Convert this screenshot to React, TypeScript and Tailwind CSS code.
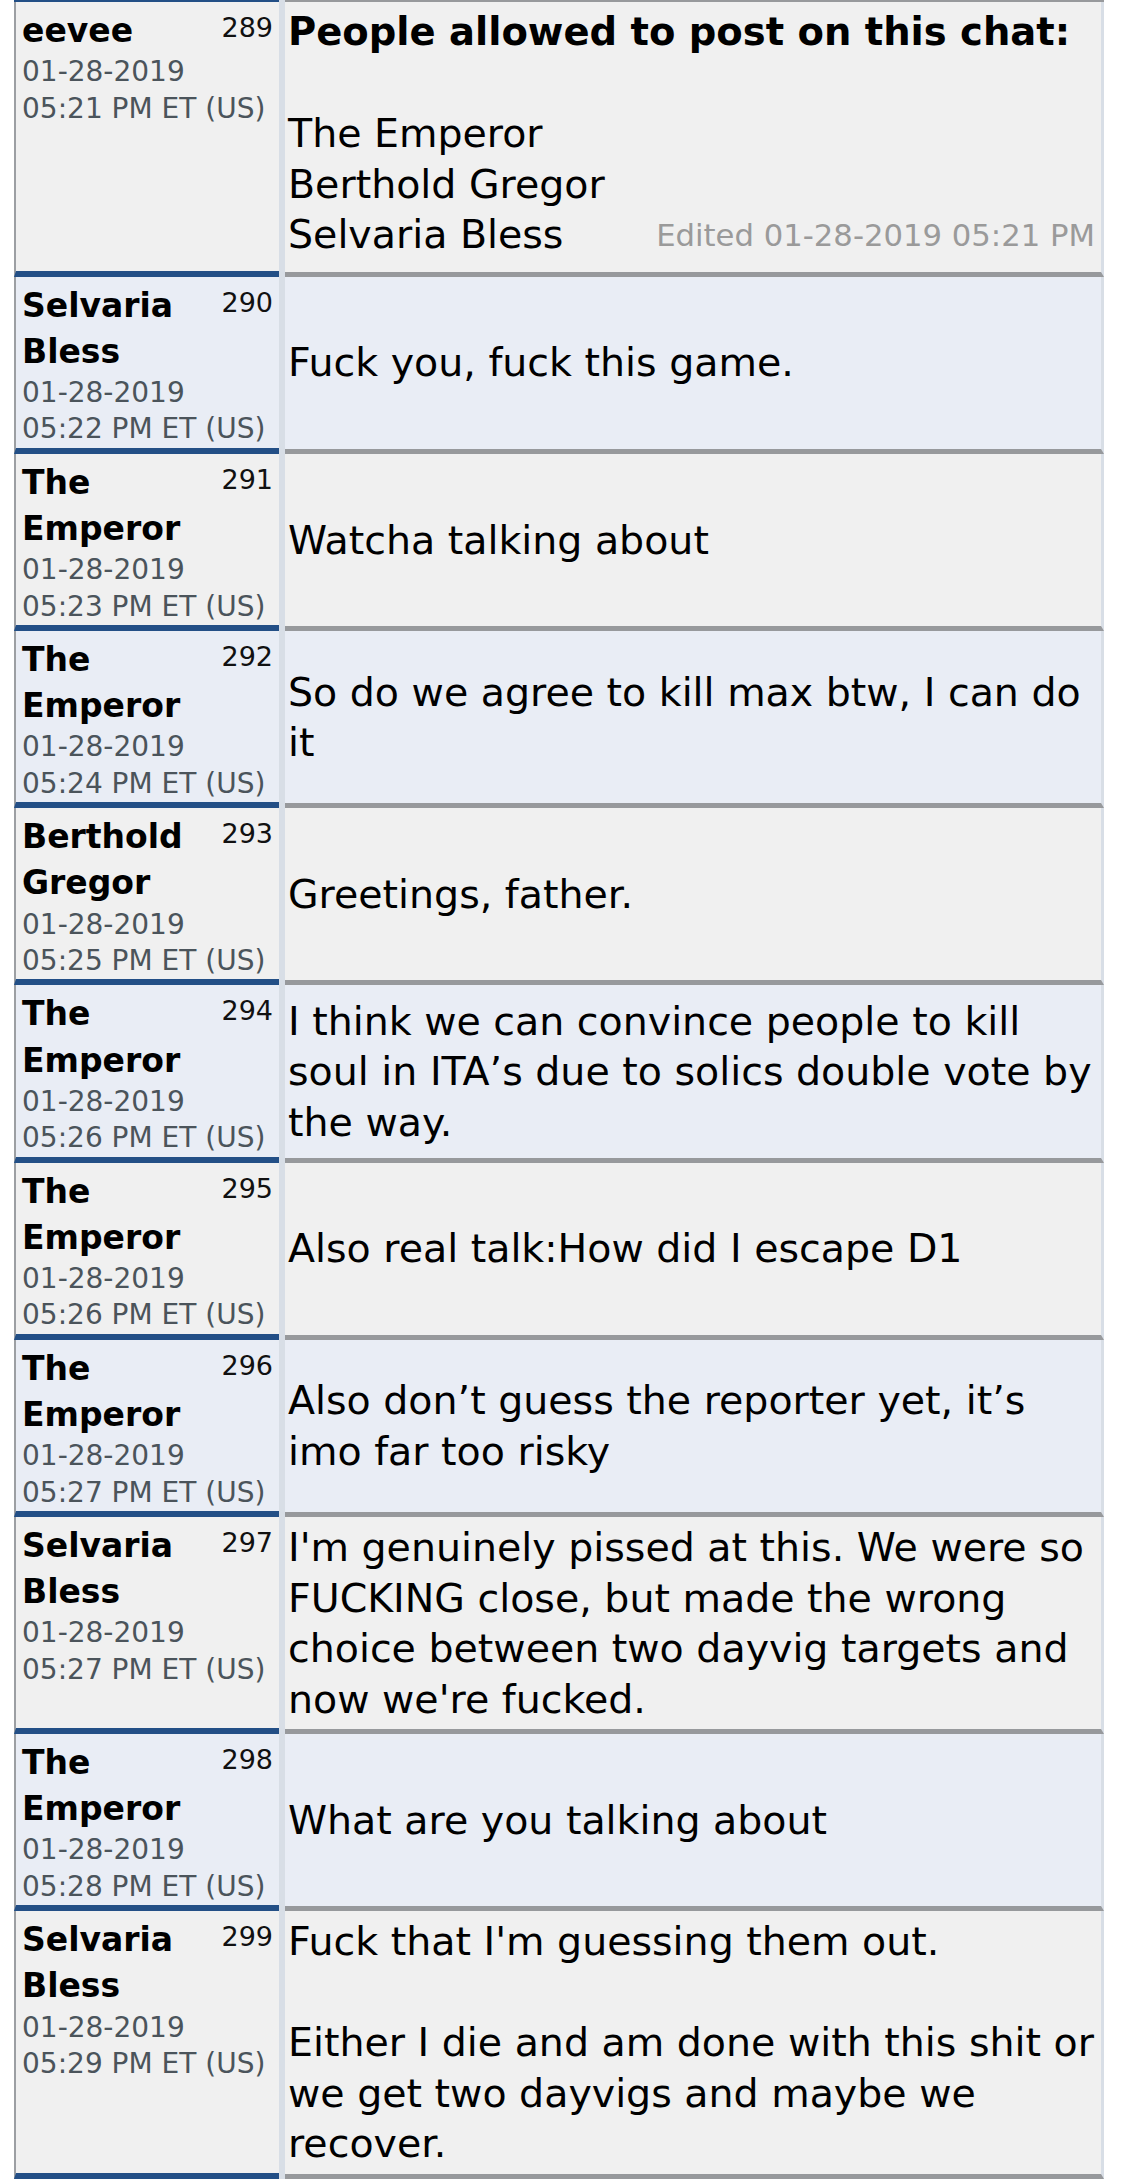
import React from 'react';

type Post = {
  num: number;
  name: string;
  time: string;
  lines: string[];
};

const posts: Post[] = [
  { num: 290, name: 'Selvaria Bless', time: '05:22', lines: ['Fuck you, fuck this game.'] },
  { num: 291, name: 'The Emperor', time: '05:23', lines: ['Watcha talking about'] },
  { num: 292, name: 'The Emperor', time: '05:24', lines: ['So do we agree to kill max btw, I can do', 'it'] },
  { num: 293, name: 'Berthold Gregor', time: '05:25', lines: ['Greetings, father.'] },
  {
    num: 294,
    name: 'The Emperor',
    time: '05:26',
    lines: ['I think we can convince people to kill', 'soul in ITA’s due to solics double vote by', 'the way.'],
  },
  { num: 295, name: 'The Emperor', time: '05:26', lines: ['Also real talk:How did I escape D1'] },
  { num: 296, name: 'The Emperor', time: '05:27', lines: ['Also don’t guess the reporter yet, it’s', 'imo far too risky'] },
  {
    num: 297,
    name: 'Selvaria Bless',
    time: '05:27',
    lines: [
      "I'm genuinely pissed at this. We were so",
      'FUCKING close, but made the wrong',
      'choice between two dayvig targets and',
      "now we're fucked.",
    ],
  },
  { num: 298, name: 'The Emperor', time: '05:28', lines: ['What are you talking about'] },
  {
    num: 299,
    name: 'Selvaria Bless',
    time: '05:29',
    lines: [
      "Fuck that I'm guessing them out.",
      '',
      'Either I die and am done with this shit or',
      'we get two dayvigs and maybe we',
      'recover.',
    ],
  },
];

function Author({ num, name, time, even }: { num: number; name: string; time: string; even: boolean }) {
  return (
    <div
      className={`w-[265px] shrink-0 border-l-2 border-b-[6px] border-l-[#9c9fa3] border-b-[#234f86] px-[6px] pt-[6px] ${
        even ? 'bg-[#e9edf5]' : 'bg-[#f0f0f0]'
      }`}
    >
      <div className="flex items-start justify-between gap-2">
        <div className="text-[33px] font-bold leading-[46.2px] text-black">{name}</div>
        <div className="mt-[2px] shrink-0 text-[27px] leading-[35px] text-[#111]">{num}</div>
      </div>
      <div className="text-[28px] leading-[36.4px] text-[#4b545b]">01-28-2019</div>
      <div className="text-[28px] leading-[36.4px] text-[#4b545b]">{time} PM ET (US)</div>
    </div>
  );
}

function PostRow({ post, even }: { post: Post; even: boolean }) {
  return (
    <div className="flex gap-[6px]">
      <Author num={post.num} name={post.name} time={post.time} even={even} />
      <div
        className={`flex flex-1 flex-col justify-center border-r-[3px] border-b-[5px] border-r-[#d8dee6] border-b-[#97999c] pl-[3px] pr-[6px] py-[5px] text-[39.5px] leading-[50.5px] text-black ${
          even ? 'bg-[#e9edf5]' : 'bg-[#f0f0f0]'
        }`}
      >
        {post.lines.map((line, i) => (
          <div key={i} className="whitespace-nowrap">
            {line === '' ? '\u00a0' : line}
          </div>
        ))}
      </div>
    </div>
  );
}

export default function App() {
  return (
    <div className="min-h-screen bg-white font-['DejaVu_Sans','Verdana',sans-serif]">
      <div className="ml-[14px] w-[1090px] bg-[#d8dee6]">
        {/* tail of the previous post */}
        <div className="flex h-[2px] gap-[6px]">
          <div className="w-[265px] bg-[#234f86]" />
          <div className="flex-1 bg-[#97999c]" />
        </div>

        {/* first post with the edit note */}
        <div className="flex gap-[6px]">
          <Author num={289} name="eevee" time="05:21" even={false} />
          <div className="flex flex-1 flex-col border-r-[3px] border-b-[5px] border-r-[#d8dee6] border-b-[#97999c] bg-[#f0f0f0] pl-[3px] pr-[6px] pt-[5px] pb-[8px] text-[39.5px] leading-[50.5px] text-black">
            <div className="text-[38.5px] font-bold">People allowed to post on this chat:</div>
            <div>{'\u00a0'}</div>
            <div>The Emperor</div>
            <div>Berthold Gregor</div>
            <div className="flex items-baseline justify-between">
              <span>Selvaria Bless</span>
              <span className="relative top-[-2px] text-[30.7px] text-[#9a9a9a]">Edited 01-28-2019 05:21 PM</span>
            </div>
          </div>
        </div>

        {posts.map((post, i) => (
          <PostRow key={post.num} post={post} even={i % 2 === 0} />
        ))}
      </div>
    </div>
  );
}
